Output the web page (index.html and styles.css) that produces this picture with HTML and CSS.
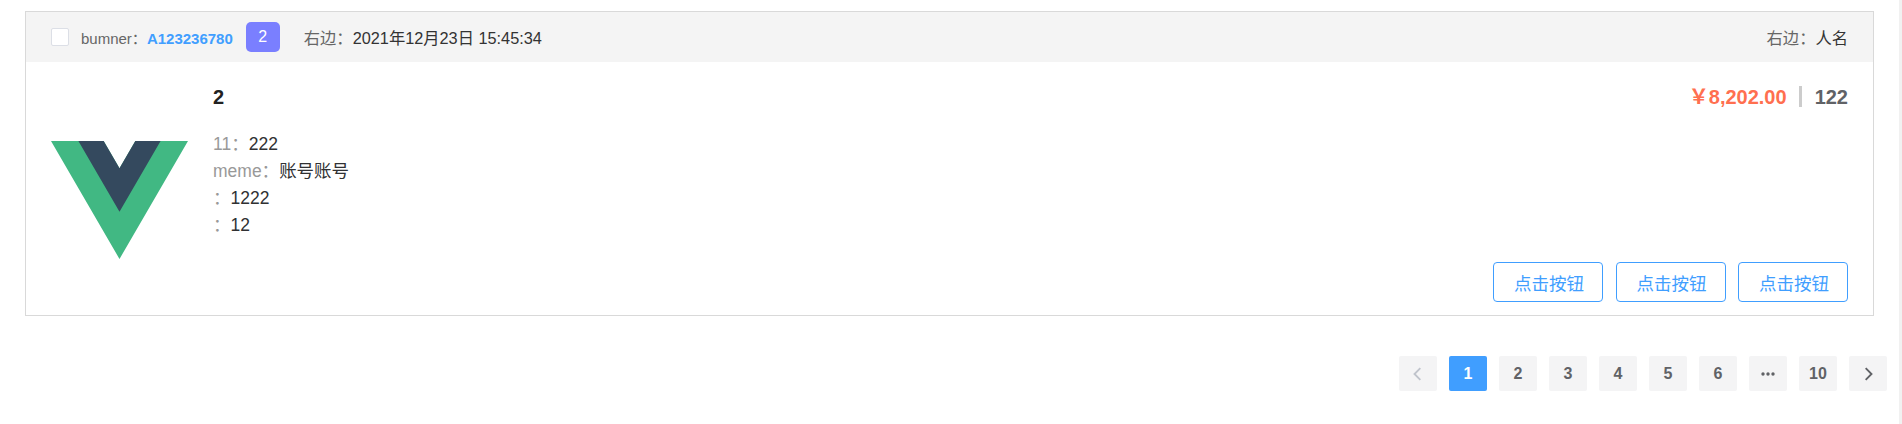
FILE: index.html
```html
<!DOCTYPE html>
<html lang="zh">
<head>
  <meta charset="UTF-8" />
  <title>订单列表</title>
  <link rel="stylesheet" href="styles.css">
</head>
<body>
  <div class="page">
    <div class="card">
      <div class="card-head">
        <div class="head-left">
          <span class="checkbox"></span>
          <span class="bumner"><span class="label">bumner：</span><strong class="code">A123236780</strong></span>
          <span class="tag">2</span>
          <span class="info"><span class="label">右边：</span>2021年12月23日 15:45:34</span>
        </div>
        <span class="info"><span class="label">右边：</span>人名</span>
      </div>
      <div class="card-body">
        <svg class="logo" viewBox="0 0 261.76 226.69" preserveAspectRatio="none" xmlns="http://www.w3.org/2000/svg">
          <path fill="#41b883" d="M161.096.001l-30.225 52.351L100.647.001H-.005l130.877 226.688L261.749.001z"/>
          <path fill="#34495e" d="M161.096.001l-30.225 52.351L100.647.001H52.346l78.526 136.01L209.398.001z"/>
        </svg>
        <div class="main">
          <div class="title">2</div>
          <ul class="fields">
            <li><span class="key">11：</span>222</li>
            <li><span class="key">meme：</span>账号账号</li>
            <li><span class="key">：</span>1222</li>
            <li><span class="key">：</span>12</li>
          </ul>
        </div>
        <div class="side">
          <div class="sum"><span class="price">￥8,202.00</span><span class="count">122</span></div>
          <div class="actions">
            <button class="btn">点击按钮</button>
            <button class="btn">点击按钮</button>
            <button class="btn">点击按钮</button>
          </div>
        </div>
      </div>
    </div>

    <div class="pager">
      <button class="pg off">
        <svg viewBox="0 0 12 12"><path d="M8 1L3 6l5 5"/></svg>
      </button>
      <button class="pg on">1</button>
      <button class="pg">2</button>
      <button class="pg">3</button>
      <button class="pg">4</button>
      <button class="pg">5</button>
      <button class="pg">6</button>
      <button class="pg">
        <svg class="dots" viewBox="0 0 14 4"><circle cx="2" cy="2" r="1.700"/><circle cx="7" cy="2" r="1.700"/><circle cx="12" cy="2" r="1.700"/></svg>
      </button>
      <button class="pg">10</button>
      <button class="pg">
        <svg viewBox="0 0 12 12"><path d="M4 1l5 5-5 5"/></svg>
      </button>
    </div>
  </div>
</body>
</html>
```

FILE: styles.css
```css
html {
  overflow: hidden;
}

html, body {
  margin: 0;
  padding: 0;
  height: 424px;
  background-color: white;
}

body {
  font-family: "Liberation Sans", "Noto Sans CJK SC", sans-serif;
  font-size: 16.300px;
  color: #333;
  border-right: 3px solid #f1f1f1;
  box-sizing: border-box;
  position: relative;
}

/* scrollbar thumb */
body::after {
  content: "";
  position: absolute;
  top: 3px;
  bottom: 14px;
  right: -2px;
  width: 2px;
  background-color: #c1c1c1;
}

.page {
  padding: 11px 25px 0 25px;
}

.card {
  border: 1px solid #d9d9d9;
  height: 305px;
  box-sizing: border-box;
  display: flex;
  flex-direction: column;
}

.card-head {
  height: 50px;
  background-color: #f4f4f4;
  display: flex;
  align-items: center;
  justify-content: space-between;
  padding: 0 25px 0 25px;
}

.head-left {
  display: flex;
  align-items: center;
}

.checkbox {
  width: 16px;
  height: 16px;
  background-color: white;
  border: 1px solid #dcdfe6;
  border-radius: 2px;
  margin-right: 12px;
}

.bumner {
  font-size: 15px;
}

.label {
  color: #666;
}

.code {
  color: #409eff;
}

.tag {
  width: 34px;
  height: 30px;
  line-height: 30px;
  margin: 0 24px 0 13px;
  text-align: center;
  background-color: #7a7fff;
  color: white;
  border-radius: 5px;
  font-size: 16px;
}

.card-body {
  flex: 1;
  display: flex;
  padding: 0 25px;
}

.logo {
  width: 137px;
  height: 118px;
  margin: 79px 25px 0 0;
  flex-shrink: 0;
}

.main {
  flex: 1;
}

.title {
  font-size: 20px;
  font-weight: bold;
  color: #222;
  margin-top: 24px;
}

.fields {
  list-style: none;
  margin: 22px 0 0 0;
  padding: 0;
  font-size: 17.500px;
  color: #303133;
}

.fields li {
  height: 27px;
  line-height: 27px;
}

.key {
  color: #999;
}

.side {
  display: flex;
  flex-direction: column;
  justify-content: space-between;
  align-items: flex-end;
  padding: 24px 0 13px 0;
}

.sum {
  display: flex;
  align-items: center;
  font-size: 20px;
  font-weight: bold;
  height: 21px;
}

.price {
  color: #ff6f4f;
  padding-top: 2px;
  line-height: 19px;
}

.count {
  color: #606266;
  border-left: 3px solid #ccc;
  margin-left: 12px;
  padding: 2px 0 0 13px;
  line-height: 19px;
}

.actions {
  display: flex;
  gap: 12.500px;
}

.btn {
  width: 110px;
  height: 40px;
  background-color: white;
  border: 1px solid #409eff;
  border-radius: 4px;
  color: #409eff;
  font-family: inherit;
  font-size: 17.500px;
  padding: 0 0 0 2px;
  cursor: pointer;
}

.pager {
  display: flex;
  justify-content: flex-end;
  gap: 12px;
  margin-top: 40px;
  margin-right: -13px;
}

.pg {
  width: 38px;
  height: 35px;
  background-color: #f4f4f5;
  border: none;
  border-radius: 2px;
  color: #606266;
  font-family: inherit;
  font-size: 16px;
  font-weight: bold;
  padding: 0;
  display: flex;
  align-items: center;
  justify-content: center;
}

.pg svg {
  width: 14px;
  height: 14px;
  fill: none;
  stroke: currentColor;
  stroke-width: 1.600;
}

.pg svg.dots {
  width: 14px;
  height: 4px;
  fill: currentColor;
  stroke: none;
}

.pg.on {
  background-color: #409eff;
  color: white;
}

.pg.off {
  color: #c0c4cc;
}
```
